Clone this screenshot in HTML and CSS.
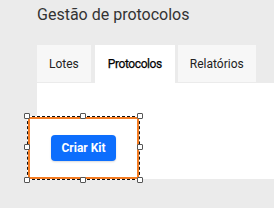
FILE: index.html
```html
<!DOCTYPE html>
<html lang="pt">
<head>
<meta charset="utf-8">
<title>Gestão de protocolos</title>
<link rel="stylesheet" href="styles.css">
</head>
<body>
<div class="page">
  <h1 class="title">Gestão de protocolos</h1>
  <nav class="tabs">
    <div class="tab">Lotes</div>
    <div class="tab active">Protocolos</div>
    <div class="tab">Relatórios</div>
  </nav>
  <div class="panel">
    <div class="selection">
      <div class="frame">
        <button class="btn">Criar Kit</button>
      </div>
      <span class="handle h-tl"></span>
      <span class="handle h-tc"></span>
      <span class="handle h-tr"></span>
      <span class="handle h-ml"></span>
      <span class="handle h-mr"></span>
      <span class="handle h-bl"></span>
      <span class="handle h-bc"></span>
      <span class="handle h-br"></span>
    </div>
  </div>
</div>
</body>
</html>
```
FILE: styles.css
```css
html, body {
  margin: 0;
  padding: 0;
}
body {
  background: #ebebeb;
  font-family: Roboto, "Liberation Sans", sans-serif;
  color: #333;
  width: 274px;
  height: 208px;
  overflow: hidden;
}
.page {
  padding-left: 37px;
}
.title {
  margin: 0;
  padding-top: 5px;
  font-size: 16px;
  line-height: 20px;
  font-weight: 400;
  color: #333;
}
.tabs {
  display: flex;
  align-items: flex-start;
  margin-top: 20px;
  height: 38px;
}
.tab {
  height: 37px;
  padding: 0 12px;
  display: flex;
  align-items: center;
  font-size: 12px;
  background: #f7f7f7;
  color: #222;
  margin-right: 4px;
  box-sizing: border-box;
}
.tab.active {
  height: 38px;
  width: 80px;
  justify-content: center;
  padding: 0;
  background: #fff;
  color: #000;
  font-weight: 400;
  letter-spacing: -0.4px;
  -webkit-text-stroke: 0.25px #000;
  margin-right: 3px;
}
.panel {
  position: relative;
  background: #fff;
  height: 96px;
}
.selection {
  position: absolute;
  left: -10px;
  top: 33px;
  width: 111px;
  height: 62px;
  border: 1px solid #fff;
}
.selection::before {
  content: "";
  position: absolute;
  inset: -1px;
  border: 1px dashed #111;
}
.frame {
  position: absolute;
  left: 0;
  top: 0;
  width: 111px;
  height: 62px;
  box-sizing: border-box;
  background: #fff;
  border: 2px solid #f57c22;
  display: flex;
  align-items: center;
  justify-content: center;
}
.btn {
  width: 65px;
  height: 26px;
  border: none;
  border-radius: 4px;
  background: #0d6efd;
  color: #fff;
  font-family: Roboto, "Liberation Sans", sans-serif;
  font-size: 12px;
  font-weight: 700;
  padding: 0;
  box-shadow: 0 1px 2px rgba(0, 0, 0, 0.15);
}
.handle {
  position: absolute;
  width: 6px;
  height: 6px;
  box-sizing: border-box;
  background: #fff;
  border: 1px solid #555;
  border-radius: 1px;
}
.h-tl { left: -4px; top: -4px; }
.h-tc { left: 52px; top: -4px; }
.h-tr { right: -4px; top: -4px; }
.h-ml { left: -4px; top: 27px; }
.h-mr { right: -4px; top: 27px; }
.h-bl { left: -4px; bottom: -4px; }
.h-bc { left: 52px; bottom: -4px; }
.h-br { right: -4px; bottom: -4px; }
```
